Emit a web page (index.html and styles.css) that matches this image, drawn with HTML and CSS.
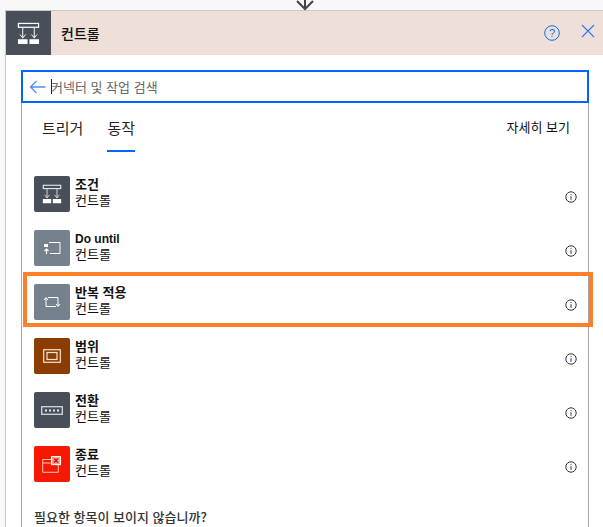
FILE: index.html
```html
<!DOCTYPE html>
<html lang="ko">
<head>
<meta charset="utf-8">
<title>컨트롤</title>
<link rel="stylesheet" href="styles.css">
</head>
<body>
<svg class="flow-arrow" width="22" height="11" viewBox="0 0 22 11"><path d="M11 -6V8M3 1l8 8 8-8" fill="none" stroke="#444" stroke-width="2"/></svg>
<div class="card">
  <header class="head">
    <div class="head-icon">
      <svg width="23" height="23" viewBox="0 0 24 24" fill="none" stroke="#fff"><rect x="1.500" y="1.500" width="21" height="4" stroke-width="1.300"/><path d="M6 6v11M18 6v11M3 13l3 3.500L9 13M15 13l3 3.500 3-3.500"/><path d="M1 18h10v5H1zM13 18h10v5H13z" fill="#fff" stroke="none"/></svg>
    </div>
    <div class="head-title">컨트롤</div>
    <svg class="help" width="16" height="16" viewBox="0 0 16 16"><circle cx="8" cy="8" r="7.300" fill="none" stroke="#0f6cf0" stroke-width="1"/><text x="8" y="12" text-anchor="middle" class="help-mark">?</text></svg>
    <svg class="close" width="14" height="14" viewBox="0 0 14 14"><path d="M1 1l12 12M13 1 1 13" stroke="#2a78f0" stroke-width="1.100" fill="none"/></svg>
  </header>
  <div class="body">
    <div class="search">
      <svg class="back" width="17" height="14" viewBox="0 0 17 14"><path d="M16.500 7H1.500M7.500 1 1.500 7l6 6" fill="none" stroke="#4a90f5" stroke-width="1.300"/></svg>
      <span class="caret"></span>
      <span class="placeholder">커넥터 및 작업 검색</span>
    </div>
    <div class="panel">
      <div class="tabs">
        <span class="tab">트리거</span>
        <span class="tab active">동작</span>
        <span class="more">자세히 보기</span>
      </div>
      <ul class="list">
        <li class="item">
          <div class="tile slate"><svg width="20" height="20" viewBox="0 0 24 24" fill="none" stroke="#e8eaed"><rect x="1.500" y="1.500" width="21" height="4" stroke-width="1.300"/><path d="M6 6v11M18 6v11M3 13l3 3.500L9 13M15 13l3 3.500 3-3.500"/><path d="M1 18h10v5H1zM13 18h10v5H13z" fill="#fff" stroke="none"/></svg></div>
          <div class="txt"><b>조건</b><span>컨트롤</span></div>
          <svg class="info" width="12" height="12" viewBox="0 0 12 12"><circle cx="6" cy="6" r="5.200" fill="none" stroke="#333"/><path d="M6 3.200v1M6 5.200v3.600" stroke="#3b2a80"/></svg>
        </li>
        <li class="item">
          <div class="tile steel"><svg width="18" height="14" viewBox="0 0 18 14" fill="none" stroke="#fff"><path d="M6 1.500h11v11H7"/><path d="M1 3h4v3H1z" fill="#fff" stroke="none"/><path d="M3.500 13V8M1.500 10l2-2 2 2" stroke-width="1.100"/></svg></div>
          <div class="txt"><b class="latin">Do until</b><span>컨트롤</span></div>
          <svg class="info" width="12" height="12" viewBox="0 0 12 12"><circle cx="6" cy="6" r="5.200" fill="none" stroke="#333"/><path d="M6 3.200v1M6 5.200v3.600" stroke="#3b2a80"/></svg>
        </li>
        <li class="item">
          <div class="tile steel"><svg width="18" height="14" viewBox="0 0 18 14" fill="none" stroke="#fff"><path d="M3 3v8.500h10M1 5l2-2.500L5 5"/><path d="M15 11V2.500H5M13 9l2 2.500L17 9"/></svg></div>
          <div class="txt"><b>반복 적용</b><span>컨트롤</span></div>
          <svg class="info" width="12" height="12" viewBox="0 0 12 12"><circle cx="6" cy="6" r="5.200" fill="none" stroke="#333"/><path d="M6 3.200v1M6 5.200v3.600" stroke="#3b2a80"/></svg>
        </li>
        <li class="item">
          <div class="tile brown"><svg width="18" height="14" viewBox="0 0 18 14" fill="none" stroke="#f3e4d8"><rect x="0.700" y="0.700" width="16.600" height="12.600" stroke-width="1.200"/><rect x="4" y="3.500" width="10" height="7" stroke-width="1.200"/></svg></div>
          <div class="txt"><b>범위</b><span>컨트롤</span></div>
          <svg class="info" width="12" height="12" viewBox="0 0 12 12"><circle cx="6" cy="6" r="5.200" fill="none" stroke="#333"/><path d="M6 3.200v1M6 5.200v3.600" stroke="#3b2a80"/></svg>
        </li>
        <li class="item">
          <div class="tile slate"><svg width="22" height="9" viewBox="0 0 22 9"><rect x="0.700" y="0.700" width="20.600" height="7.600" fill="none" stroke="#d5d8dc" stroke-width="1.300"/><path d="M4 3.500h2v2H4zM8 3.500h2v2H8zM12 3.500h2v2h-2zM16 3.500h2v2h-2z" fill="#e8eaed"/></svg></div>
          <div class="txt"><b>전환</b><span>컨트롤</span></div>
          <svg class="info" width="12" height="12" viewBox="0 0 12 12"><circle cx="6" cy="6" r="5.200" fill="none" stroke="#333"/><path d="M6 3.200v1M6 5.200v3.600" stroke="#3b2a80"/></svg>
        </li>
        <li class="item">
          <div class="tile red"><svg width="20" height="17" viewBox="0 0 20 17" fill="none" stroke="#ffc4b8"><path d="M9 3.500H.7v12.800h15.600V9M.7 7h8"/><rect x="9.500" y="0.600" width="9" height="8" fill="#f89b8c" stroke="#fff" stroke-width="1.100"/><path d="M12 2.500l4 4M16 2.500l-4 4" stroke="#c00" stroke-width="1.100"/></svg></div>
          <div class="txt"><b>종료</b><span>컨트롤</span></div>
          <svg class="info" width="12" height="12" viewBox="0 0 12 12"><circle cx="6" cy="6" r="5.200" fill="none" stroke="#333"/><path d="M6 3.200v1M6 5.200v3.600" stroke="#3b2a80"/></svg>
        </li>
      </ul>
      <p class="missing">필요한 항목이 보이지 않습니까?</p>
    </div>
  </div>
</div>
<div class="highlight"></div>
</body>
</html>
```

FILE: styles.css
```css
* { box-sizing: border-box; }
html, body { margin: 0; padding: 0; height: 527px; overflow: hidden; }
body {
  background: #f8f8f8;
  font-family: "Liberation Sans", "Noto Sans CJK KR", sans-serif;
  color: #111;
  position: relative;
  padding: 10px 0 0 5px;
}
.flow-arrow { position: absolute; left: 294px; top: 0; }
.card {
  border: 1px solid #c8c8c8;
  border-right: 0;
  border-bottom: 0;
  background: #fff;
  height: 517px;
}
.head {
  display: flex;
  align-items: center;
  height: 44px;
  background: #eee0d9;
}
.head-icon {
  width: 45px;
  height: 44px;
  background: #484f59;
  display: flex;
  align-items: center;
  justify-content: center;
}
.head-title {
  margin-left: 10px;
  font-size: 14px;
  font-family: "Noto Sans CJK KR", sans-serif;
  font-weight: 500;
  flex: 1;
}
.help { margin-right: 21px; }
.help-mark { font: 11px "Liberation Sans", sans-serif; fill: #0f6cf0; }
.close { margin-right: 8px; margin-top: -5px; }
.body { padding: 15px 14px 0 15px; }
.search {
  height: 33px;
  border: 2px solid #0066ff;
  display: flex;
  align-items: center;
  padding-left: 6px;
  background: #fff;
  position: relative;
  z-index: 1;
}
.back { flex: none; }
.caret { width: 1px; height: 15px; background: #222; margin-left: 5px; }
.placeholder {
  font-family: "Noto Sans CJK KR", sans-serif;
  font-size: 13px;
  color: #666;
  margin-left: -1px;
}
.panel {
  margin-top: -1px;
  height: 425px;
  border-left: 1px solid #a6a6a6;
  border-right: 1px solid #a6a6a6;
  border-top: 1px solid #a6a6a6;
  padding: 0 0 0 12px;
}
.tabs {
  display: flex;
  align-items: flex-start;
  height: 64px;
  font-family: "Noto Sans CJK KR", sans-serif;
}
.tab {
  font-size: 15px;
  margin: 0 24px 0 8px;
  padding: 14px 0 10px;
  height: 49px;
  line-height: 22px;
  color: #222;
}
.tab + .tab { margin-left: 0; }
.tab.active { border-bottom: 2px solid #0066ff; }
.more {
  margin-left: auto;
  margin-right: 18px;
  margin-top: 15px;
  font-size: 13px;
  line-height: 18px;
  color: #111;
}
.list { list-style: none; margin: 0; padding: 0; }
.item {
  display: flex;
  align-items: center;
  height: 54px;
  position: relative;
}
.tile {
  width: 36px;
  height: 36px;
  border-radius: 2px;
  flex: none;
  display: flex;
  align-items: center;
  justify-content: center;
}
.slate { background: #484f59; }
.steel { background: #76818e; }
.brown { background: #8c3d00; }
.red { background: #f61800; }
.txt {
  margin-left: 5px;
  display: flex;
  flex-direction: column;
  flex: 1;
  font-family: "Liberation Sans", "Noto Sans CJK KR", sans-serif;
  font-size: 13px;
  line-height: 16px;
  margin-top: -2px;
}
.txt b { font-weight: 700; }
.txt .latin { font-size: 12px; }
.info { margin-right: 11px; margin-top: 6px; }
.missing {
  margin: 18px 0 0;
  font-size: 13px;
  line-height: 16px;
  color: #333;
  font-family: "Noto Sans CJK KR", sans-serif;
  font-weight: 500;
}
.highlight {
  position: absolute;
  left: 23px;
  top: 272px;
  width: 570px;
  height: 55px;
  border: 4px solid #ff7f2a;
  pointer-events: none;
}
```
